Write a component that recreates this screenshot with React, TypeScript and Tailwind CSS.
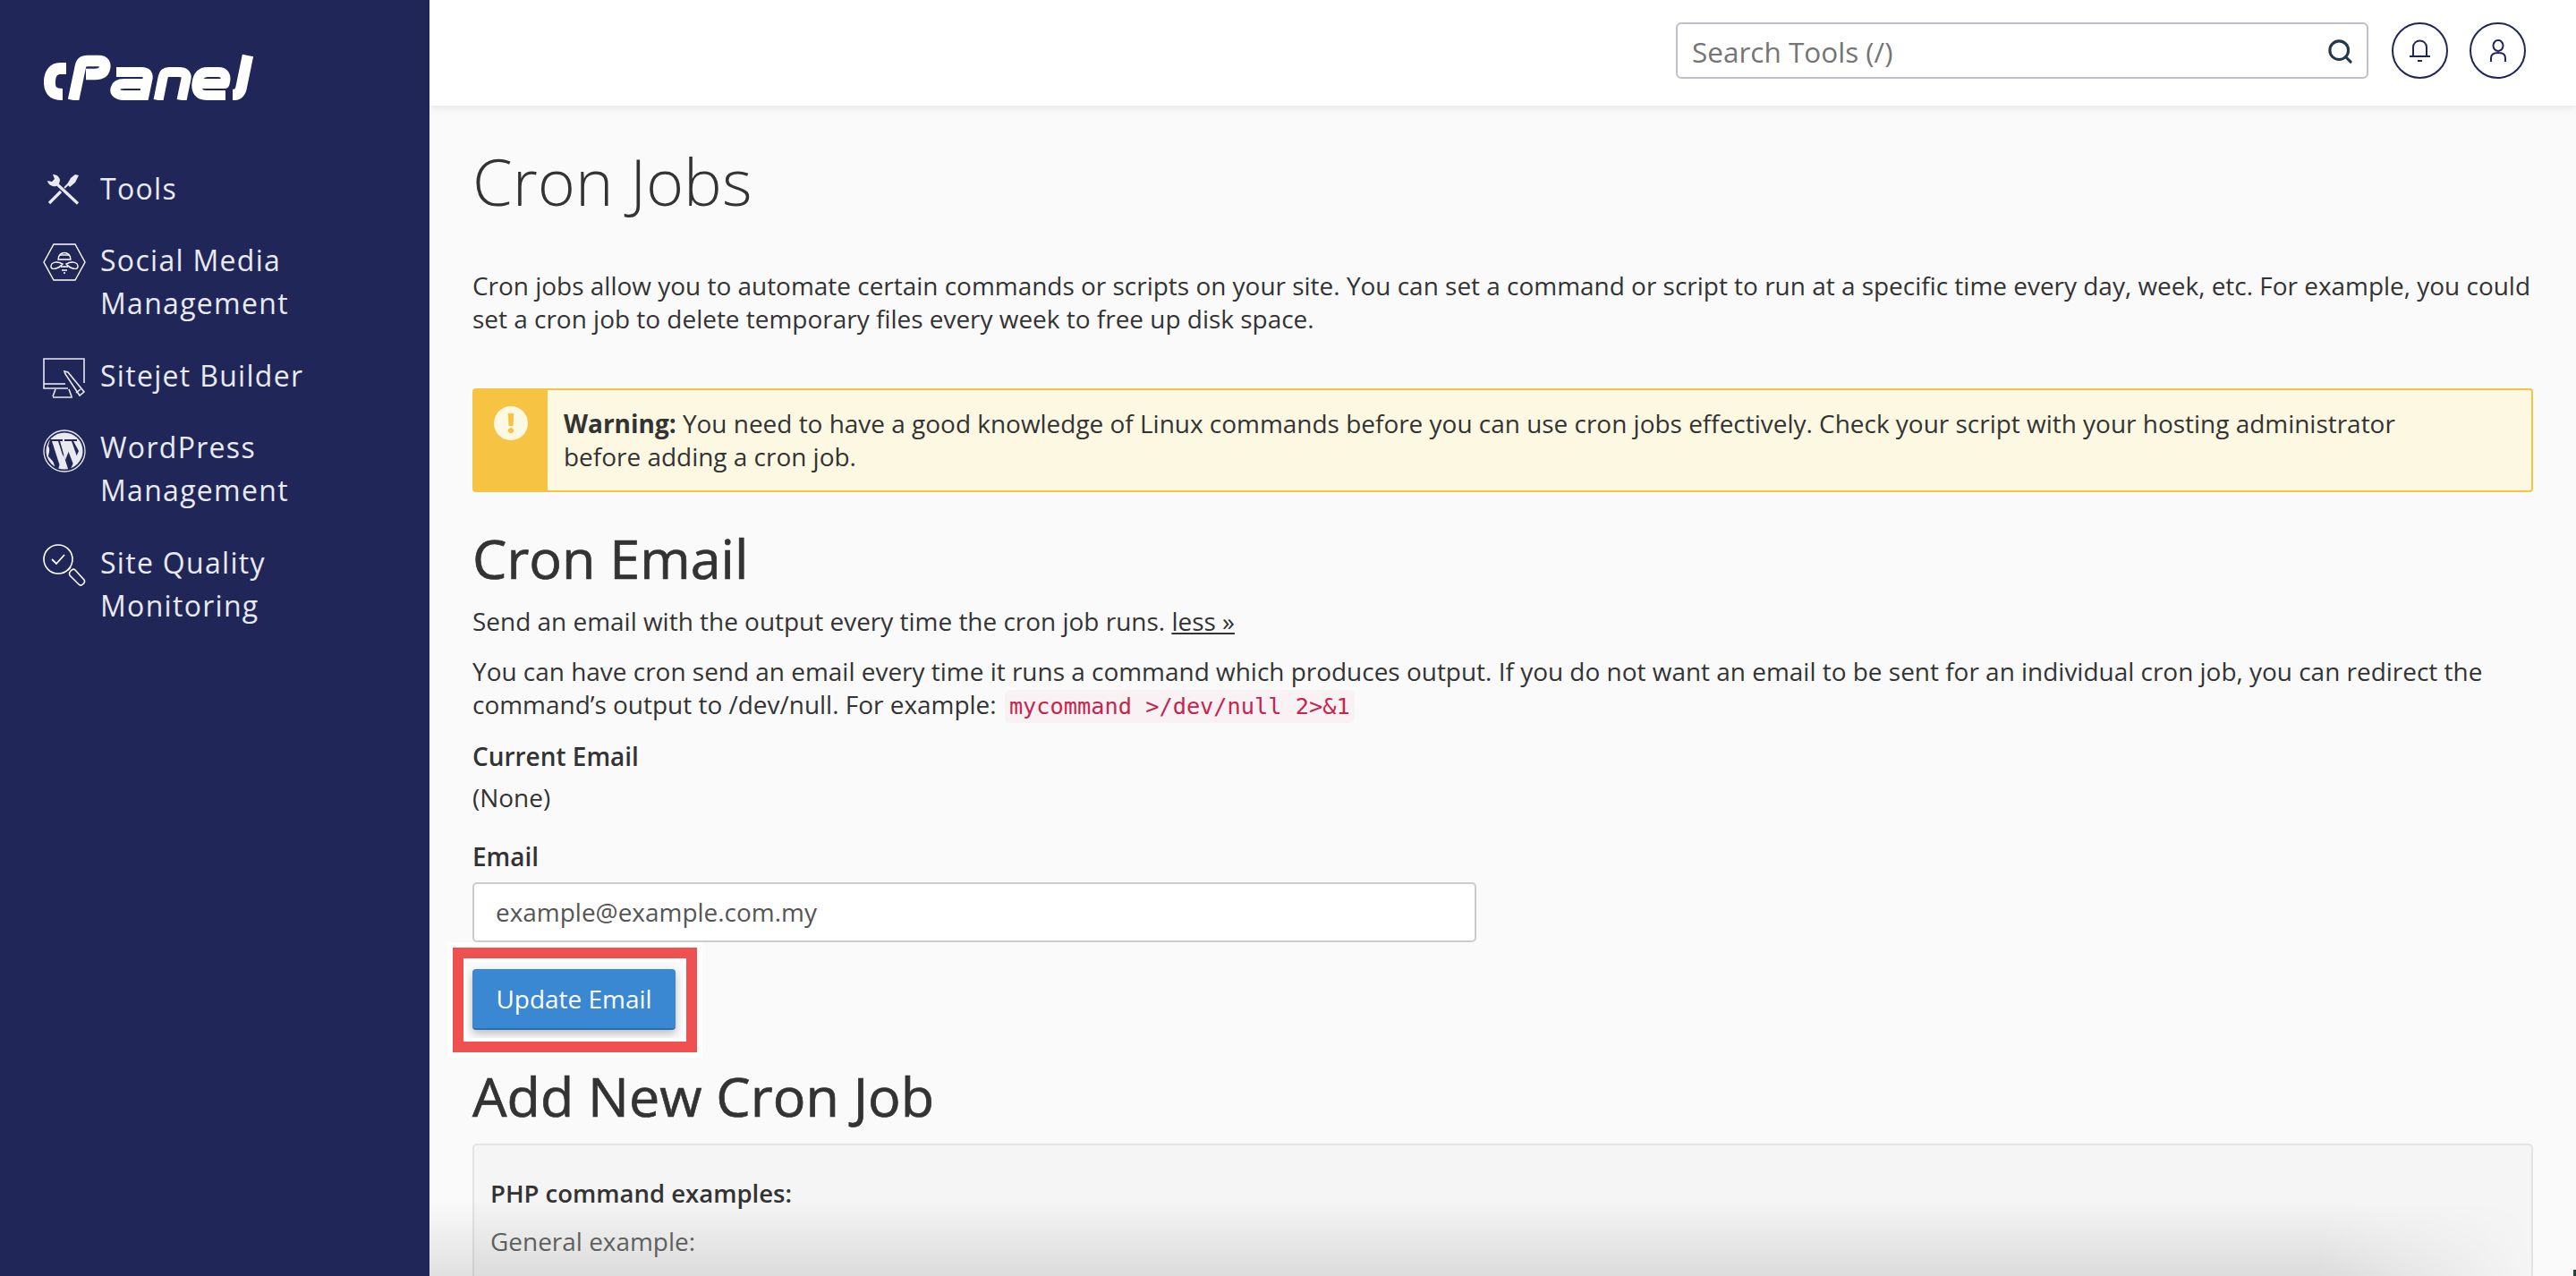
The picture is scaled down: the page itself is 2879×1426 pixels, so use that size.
import React from 'react';
import { Search } from 'lucide-react';

const SocialIcon = () => (
  <svg viewBox="0 0 48 42" className="w-12 h-[42px] mt-[3px]" fill="none" stroke="#fff" strokeWidth="1.4">
    <path d="M1 21 L12 1 H36 L47 21 L36 41 H12 Z" />
    <path d="M17 18 C17 8 31 8 31 18 Z" />
    <path d="M19 13 H29" />
    <path d="M9 26 C9 20 17 20 22 23 C17 29 9 30 9 26 Z" />
    <path d="M39 26 C39 20 31 20 26 23 C31 29 39 30 39 26 Z" />
    <path d="M20 26 H28 M21 30 H27 M23 33 H25" />
  </svg>
);

const ToolsIcon = () => (
  <svg viewBox="0 0 36 34" className="w-9 h-[34px] ml-[5px] mt-[6px]" fill="#e8eaf0">
    <path d="M6 0 C10 0 13 2 14 6 C14 8 13 10 13 10 L10 13 C6 14 1 12 0 7 L5 8 L8 5 Z" />
    <path d="M11 11 L34 32.5" stroke="#e8eaf0" strokeWidth="3.2" fill="none" />
    <path d="M2 32 L15 19" stroke="#e8eaf0" strokeWidth="3.2" fill="none" />
    <path d="M19 15 L24 10" stroke="#e8eaf0" strokeWidth="2" fill="none" />
    <path d="M22 11 L25 14 L31 9 L35 1 L31 0 L26 4 Z" />
  </svg>
);

const SitejetIcon = () => (
  <svg viewBox="0 0 48 46" className="w-12 h-[46px] mt-[2px]" fill="none" stroke="#e8eaf0" strokeWidth="1.6">
    <path d="M46 28 V1 H1 V34 H28" />
    <path d="M1 29 H25" />
    <path d="M14 35 L11 43 M29 35 L32 43 M11 44 H33" />
    <path d="M25 18 L24 15 L28 16 L46 38 L41 42 Z" />
    <path d="M37 39 L42 35" />
  </svg>
);

const WordpressIcon = () => (
  <svg viewBox="0 0 48 48" className="w-12 h-12 mt-[2px]">
    <circle cx="24" cy="24" r="23" fill="none" stroke="#e8eaf0" strokeWidth="1.3" />
    <circle cx="24" cy="24" r="20.5" fill="#e8eaf0" />
    <path d="M8 11 H22 V13 H19 L25 34 L29 24 L26 13 H24 V11 H38 V13 H34 L40 24 L31 44 H28 L23 28 L17 44 H14 L6 18 Z" fill="#202758" />
    <path d="M9 14 L16 41 L6 30 Z" fill="#202758" />
    <path d="M10 13 H17 L25 38 L21 44 H20 Z" fill="#e8eaf0" />
    <path d="M24 13 H32 L38 30 L34 39 Z" fill="#e8eaf0" />
  </svg>
);

const QualityIcon = () => (
  <svg viewBox="0 0 48 48" className="w-12 h-12 mt-[1px]" fill="none" stroke="#fff" strokeWidth="1.6">
    <circle cx="17" cy="17" r="16" />
    <path d="M10 17 L15 22 L24 12" strokeWidth="1.8" />
    <path d="M28 29 L31 26" />
    <path d="M31 30 C33 28 35 28 36 29 L46 40 C48 43 43 48 40 45 L30 35 C29 33 29 32 31 30 Z" />
  </svg>
);

const CpanelLogo = () => (
  <svg viewBox="0 0 236 52" className="w-[236px] h-[52px]" role="img" aria-label="cPanel" fill="none" stroke="#fff" strokeLinejoin="round" strokeLinecap="butt">
    <path d="M26 16.5 H19 C12 16.5 8 22 7.5 30 C7 40 10 45.5 22 45.5" strokeWidth="13" />
    <path d="M34 52 L42 14 C43 9 46 8 50 8 H62 C69 8 70 12 69 16 C68 21 64 23 58 23 H48" strokeWidth="12.5" />
    <path d="M82 20.5 H110 C116 20.5 118 23 117 28 L112 52" strokeWidth="11" />
    <path d="M113 46.5 H90 C83 46.5 80 43 81 39 C82 35 85 33.5 91 33.5 H115" strokeWidth="11" />
    <path d="M129 52 L134 27 C135 22 137 20.5 141 20.5 H152 C158 20.5 161 23 160 28 L155 52" strokeWidth="11" />
    <path d="M176 33.5 H203 C206 24 202 20.5 196 20.5 H184 C176 20.5 173 26 172 33 C171 41 174 46.5 183 46.5 H204" strokeWidth="11" />
    <path d="M229 2 L222 36 C221 43 218 46 212 46" strokeWidth="12.5" />
  </svg>
);

const nav = [
  { icon: <ToolsIcon />, label: ['Tools'], mt: 'mt-0' },
  { icon: <SocialIcon />, label: ['Social Media', 'Management'], mt: 'mt-[32px]' },
  { icon: <SitejetIcon />, label: ['Sitejet Builder'], mt: 'mt-[33px]' },
  { icon: <WordpressIcon />, label: ['WordPress', 'Management'], mt: 'mt-[30px]' },
  { icon: <QualityIcon />, label: ['Site Quality', 'Monitoring'], mt: 'mt-[33px]' },
];

const Sidebar = () => (
  <aside className="w-[480px] shrink-0 bg-[#202758] pl-[48px] pt-[60px]">
    <CpanelLogo />
    <ul className="mt-[75px]">
      {nav.map((item) => (
        <li key={item.label[0]} className={`flex items-start ${item.mt}`}>
          <span className="w-[64px] shrink-0 pt-[2px]">{item.icon}</span>
          <span className="text-[32px] leading-[48px] tracking-[1.3px] text-[#e8eaf0]">
            {item.label.map((line) => (
              <div key={line}>{line}</div>
            ))}
          </span>
        </li>
      ))}
    </ul>
  </aside>
);

const Header = () => (
  <header className="h-[118px] shrink-0 bg-white shadow-[0_3px_8px_rgba(0,0,0,0.08)] flex items-start justify-end pt-[25px] pr-[56px] relative z-10">
    <div className="w-[774px] h-[63px] border-2 border-[#bcbfd0] rounded-[6px] flex items-center justify-between pl-[16px] pr-[14px] pt-[2px] text-[31.5px] text-[#757575]">
      <span>Search Tools (/)</span>
      <Search size={31} strokeWidth={2.4} className="text-[#22394a]" />
    </div>
    <button className="ml-[26px] w-[63px] h-[63px] rounded-full border-2 border-[#202758] flex items-center justify-center">
      <svg viewBox="0 0 23 25" className="w-[23px] h-[25px]" fill="none" stroke="#202758" strokeWidth="2">
        <path d="M4 18 V9 C4 -1 19 -1 19 9 V18" />
        <path d="M0 19 H23" />
        <path d="M9 24 H14" />
      </svg>
    </button>
    <button className="ml-[24px] w-[63px] h-[63px] rounded-full border-2 border-[#202758] flex items-center justify-center">
      <svg viewBox="0 0 18 25" className="w-[18px] h-[25px]" fill="none" stroke="#202758" strokeWidth="2">
        <ellipse cx="9" cy="7" rx="5.5" ry="6" />
        <path d="M1 25 V21 C1 16 5 15 9 15 C13 15 17 16 17 21 V25" />
      </svg>
    </button>
  </header>
);

const App: React.FC = () => {
  return (
    <div className="relative flex h-screen overflow-hidden bg-[#fafafa] text-[27.96px] leading-[37px] text-[#333] font-['Open_Sans',sans-serif]">
      <Sidebar />
      <div className="relative flex-1 flex flex-col min-w-0">
        <Header />
        <main className="px-[48px] pt-[34px]">
          <h1 className="text-[72px] leading-[100px] font-light">Cron Jobs</h1>
          <p className="mt-[49px]">
            Cron jobs allow you to automate certain commands or scripts on your site. You can set a command or script to run at a specific time every day, week, etc. For example, you could set a cron job to delete temporary files every week to free up disk space.
          </p>

          <div className="mt-[59px] h-[116px] flex rounded-[4px] border-2 border-[#f6c343] bg-[#fdf8e1]">
            <div className="w-[82px] shrink-0 bg-[#f6c343] flex justify-center pt-[18px]">
              <div className="w-[38px] h-[38px] rounded-full bg-[#fdf8e1] flex items-center justify-center text-[#f6c343] text-[30px] font-extrabold leading-none">!</div>
            </div>
            <p className="pl-[18px] pr-[100px] pt-[19px]">
              <b>Warning:</b> You need to have a good knowledge of Linux commands before you can use cron jobs effectively. Check your script with your hosting administrator before adding a cron job.
            </p>
          </div>

          <h2 className="mt-[34px] text-[61px] leading-[80px] [-webkit-text-stroke:0.7px_#333]">Cron Email</h2>
          <p className="mt-[12px]">
            Send an email with the output every time the cron job runs. <a className="underline">less »</a>
          </p>
          <p className="mt-[19px]">
            You can have cron send an email every time it runs a command which produces output. If you do not want an email to be sent for an individual cron job, you can redirect the command’s output to /dev/null. For example:{' '}
            <code className="ml-[2px] px-[5px] py-[4px] rounded-[6px] bg-[#f9f2f4] text-[#c7254e] text-[25.3px] font-['DejaVu_Sans_Mono',monospace]">mycommand &gt;/dev/null 2&gt;&amp;1</code>
          </p>
          <div className="mt-[19px] font-semibold">Current Email</div>
          <div className="mt-[9px]">(None)</div>
          <label className="block mt-[29px] font-semibold">Email</label>
          <div className="mt-[10px] w-[1122px] h-[67px] bg-white border-2 border-[#ccc] rounded-[5px] flex items-center pl-[24px] text-[#555]">
            example@example.com.my
          </div>

          <div className="relative mt-[30px] w-[227px]">
            <button className="w-[227px] h-[68px] rounded-[4px] bg-[#3a87d2] border-b-2 border-[#2a6fb0] text-white shadow-[0_4px_10px_rgba(0,0,0,0.25)]">
              Update Email
            </button>
            {/* annotation box drawn over the screenshot */}
            <div className="absolute -left-[28px] -top-[30px] w-[285px] h-[129px] border-[6px] border-[#ffffff] pointer-events-none">
              <div className="w-full h-full border-[12px] border-[#ef5050] outline-[4px] outline-white -outline-offset-[16px]" />
            </div>
          </div>

          <h2 className="mt-[34px] text-[61px] leading-[80px] [-webkit-text-stroke:0.7px_#333]">Add New Cron Job</h2>
          <div className="mt-[13px] h-[300px] rounded-[5px] border-2 border-[#e3e3e3] bg-[#f5f5f5] pl-[18px] pt-[35px]">
            <div className="font-semibold text-[27.5px]">PHP command examples:</div>
            <div className="mt-[17px] text-[#666]">General example:</div>
          </div>
        </main>
        {/* soft shadow fading in along the bottom of the capture */}
        <div className="absolute inset-x-0 bottom-0 h-[85px] pointer-events-none bg-gradient-to-b from-transparent to-black/10 [mask-image:linear-gradient(to_right,black_88%,transparent_98%)]" />
        <div className="absolute right-0 bottom-0 w-[3px] h-[7px] bg-[#24433a]" />
      </div>
    </div>
  );
};

export default App;
